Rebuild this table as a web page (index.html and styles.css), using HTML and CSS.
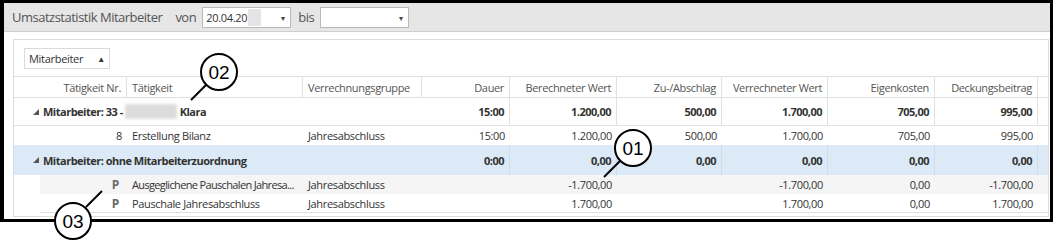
FILE: index.html
```html
<!DOCTYPE html>
<html lang="de">
<head>
<meta charset="utf-8">
<title>Umsatzstatistik Mitarbeiter</title>
<link rel="stylesheet" href="styles.css">
</head>
<body>
<div class="frame">
  <div class="titlebar">
    <span class="title">Umsatzstatistik Mitarbeiter</span>
    <span class="lbl">von</span>
    <div class="combo"><span class="val">20.04.20</span><span class="blurbox"></span><span class="arrow">▾</span></div>
    <span class="lbl">bis</span>
    <div class="combo"><span class="val"></span><span class="arrow">▾</span></div>
  </div>
  <div class="content">
    <div class="panel">
      <div class="grouppanel">
        <div class="groupbtn">Mitarbeiter <span class="sortup">▲</span></div>
      </div>
      <div class="grid">
        <div class="row head">
          <div class="c r">Tätigkeit Nr.</div>
          <div class="c">Tätigkeit</div>
          <div class="c">Verrechnungsgruppe</div>
          <div class="c r">Dauer</div>
          <div class="c r">Berechneter Wert</div>
          <div class="c r">Zu-/Abschlag</div>
          <div class="c r">Verrechneter Wert</div>
          <div class="c r">Eigenkosten</div>
          <div class="c r">Deckungsbeitrag</div>
          <div class="c last"></div>
        </div>
        <div class="row group g1">
          <div class="glabel"><span class="tri"></span>Mitarbeiter: 33 - <span class="blurname"></span> Klara</div>
          <div class="c r">15:00</div>
          <div class="c r">1.200,00</div>
          <div class="c r">500,00</div>
          <div class="c r">1.700,00</div>
          <div class="c r">705,00</div>
          <div class="c r">995,00</div>
          <div class="c last"></div>
        </div>
        <div class="row data">
          <div class="c r">8</div>
          <div class="c">Erstellung Bilanz</div>
          <div class="c">Jahresabschluss</div>
          <div class="c r">15:00</div>
          <div class="c r">1.200,00</div>
          <div class="c r">500,00</div>
          <div class="c r">1.700,00</div>
          <div class="c r">705,00</div>
          <div class="c r">995,00</div>
          <div class="c last"></div>
        </div>
        <div class="row group g2">
          <div class="glabel"><span class="tri"></span>Mitarbeiter: ohne Mitarbeiterzuordnung</div>
          <div class="c r">0:00</div>
          <div class="c r">0,00</div>
          <div class="c r">0,00</div>
          <div class="c r">0,00</div>
          <div class="c r">0,00</div>
          <div class="c r">0,00</div>
          <div class="c last"></div>
        </div>
        <div class="row data sub alt">
          <div class="c r"><span class="p">P</span></div>
          <div class="c"><span class="tight">Ausgeglichene Pauschalen Jahresa...</span></div>
          <div class="c">Jahresabschluss</div>
          <div class="c r"></div>
          <div class="c r">-1.700,00</div>
          <div class="c r"></div>
          <div class="c r">-1.700,00</div>
          <div class="c r">0,00</div>
          <div class="c r">-1.700,00</div>
          <div class="c last"></div>
        </div>
        <div class="row data sub lastrow">
          <div class="c r"><span class="p">P</span></div>
          <div class="c">Pauschale Jahresabschluss</div>
          <div class="c">Jahresabschluss</div>
          <div class="c r"></div>
          <div class="c r">1.700,00</div>
          <div class="c r"></div>
          <div class="c r">1.700,00</div>
          <div class="c r">0,00</div>
          <div class="c r">1.700,00</div>
          <div class="c last"></div>
        </div>
      </div>
    </div>
  </div>
</div>
<svg class="callouts" width="1055" height="241" viewBox="0 0 1055 241">
  <g class="co">
    <line x1="206" y1="85" x2="191" y2="100"/>
    <circle cx="219" cy="72" r="18"/>
    <text x="219" y="79">02</text>
  </g>
  <g class="co">
    <line x1="620" y1="161" x2="604" y2="177"/>
    <circle cx="633" cy="148" r="18"/>
    <text x="633" y="155">01</text>
  </g>
  <g class="co">
    <line x1="86" y1="207" x2="102" y2="191"/>
    <circle cx="73" cy="221" r="18"/>
    <text x="73" y="228">03</text>
  </g>
</svg>
</body>
</html>
```

FILE: styles.css
```css
html, body {
  margin: 0;
  padding: 0;
  background: #fff;
}
body {
  position: relative;
  width: 1055px;
  height: 241px;
  font-family: "Open Sans", "Noto Sans", sans-serif;
  color: #333;
}
.frame {
  box-sizing: border-box;
  width: 1053px;
  height: 222px;
  border: 3px solid #000;
  border-left-width: 4px;
  display: flex;
  flex-direction: column;
  background: #fff;
}
.titlebar {
  height: 28px;
  background: #e6e6e6;
  border-bottom: 1px solid #cfcfcf;
  display: flex;
  align-items: center;
  padding-left: 8px;
  font-size: 13px;
  color: #555;
  letter-spacing: -0.5px;
}
.title {
  margin-right: 13px;
}
.lbl {
  margin: 0 6px 0 0;
}
.combo {
  box-sizing: border-box;
  width: 89px;
  height: 21px;
  background: #fff;
  border: 1px solid #b9b9b9;
  display: flex;
  align-items: center;
  padding-left: 3px;
  margin-right: 7px;
  font-size: 11px;
  letter-spacing: -0.3px;
  color: #333;
}
.combo .val { flex: none; }
.blurbox {
  width: 13px;
  height: 17px;
  background: #e4e4e4;
  margin-left: 1px;
}
.combo .arrow {
  margin-left: auto;
  margin-right: 5px;
  font-size: 8px;
  color: #444;
}
.content {
  flex: 1;
  padding: 7px 1px 2px 9px;
  display: flex;
}
.panel {
  flex: 1;
  border: 1px solid #dcdcdc;
  display: flex;
  flex-direction: column;
}
.grouppanel {
  padding: 8px 10px 7px 10px;
  display: flex;
}
.groupbtn {
  box-sizing: border-box;
  width: 86px;
  height: 21px;
  border: 1px solid #dadada;
  font-size: 11px;
  letter-spacing: -0.3px;
  color: #333;
  display: flex;
  align-items: center;
  padding-left: 4px;
}
.sortup {
  font-size: 8px;
  margin-left: 14px;
  color: #333;
}
.grid {
  font-size: 11px;
  letter-spacing: -0.35px;
}
.row {
  display: grid;
  grid-template-columns: 113px 176px 119px 88px 107px 105px 106px 107px 103px 1fr;
  align-items: stretch;
}
.c {
  box-sizing: border-box;
  padding: 0 5px;
  display: flex;
  align-items: center;
  white-space: nowrap;
  overflow: hidden;
}
.c.r { justify-content: flex-end; }
.tight {
  letter-spacing: -0.65px;
  white-space: nowrap;
}
.head {
  height: 20px;
  border-top: 1px solid #dedede;
  border-bottom: 1px solid #dedede;
  color: #555;
}
.head .c { border-right: 1px solid #e2e2e2; }
.head .c.last { border-right: none; }
.group {
  grid-template-columns: 408px 88px 107px 105px 106px 107px 103px 1fr;
  font-weight: 700;
  letter-spacing: -0.5px;
}
.group .glabel {
  display: flex;
  align-items: center;
  padding-left: 19px;
  white-space: nowrap;
}
.group .c { border-right: 1px solid #e0e0e0; }
.group .c.last { border-right: none; }
.g1 {
  height: 27px;
  border-bottom: 1px solid #e3e3e3;
}
.g2 {
  height: 30px;
  background: #dbeaf6;
}
.g2 .c { border-right-color: #cfdbe6; }
.tri {
  width: 0;
  height: 0;
  border-left: 6px solid transparent;
  border-bottom: 6px solid #555;
  margin-right: 4px;
}
.blurname {
  display: inline-block;
  width: 52px;
  height: 15px;
  background: #dcdcdc;
  filter: blur(1.5px);
  margin: 0 3px 0 2px;
}
.data {
  height: 19px;
}
.sub {
  margin-left: 26px;
  grid-template-columns: 87px 176px 119px 88px 107px 105px 106px 107px 103px 1fr;
}
.alt {
  background: #f5f5f5;
}
.lastrow {
  border-bottom: 1px solid #e0e0e0;
  height: 18px;
}
.p {
  font-weight: 700;
  font-size: 12px;
  color: #6a6a6a;
  margin-right: 3px;
}
.callouts {
  position: absolute;
  left: 0;
  top: 0;
  pointer-events: none;
}
.co line {
  stroke: #000;
  stroke-width: 2;
}
.co circle {
  fill: #fff;
  stroke: #000;
  stroke-width: 2;
}
.co text {
  font-family: "Liberation Sans", Arial, sans-serif;
  font-size: 19px;
  text-anchor: middle;
  fill: #000;
}
```
